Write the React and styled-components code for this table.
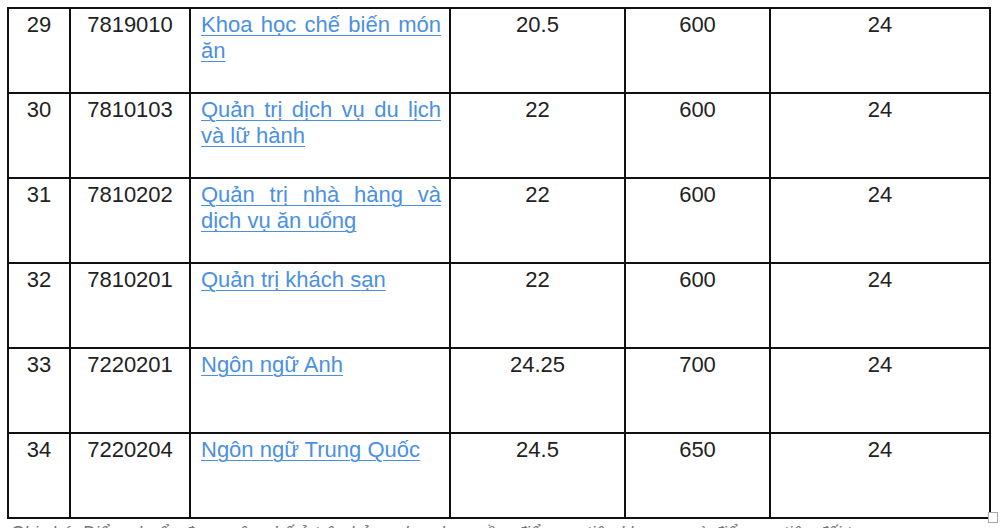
import React from 'react';
import styled, { createGlobalStyle } from 'styled-components';

const GlobalStyle = createGlobalStyle`
  html, body {
    margin: 0;
    padding: 0;
    background: #fff;
  }
  body {
    font-family: "Liberation Sans", Arial, sans-serif;
    overflow: hidden;
  }
`;

const columns = [62, 120, 260, 175, 145, 220];

const rows = [
  { stt: 29, code: '7819010', name: 'Khoa học chế biến món ăn', score: '20.5', dgnl: '600', quota: '24' },
  { stt: 30, code: '7810103', name: 'Quản trị dịch vụ du lịch và lữ hành', score: '22', dgnl: '600', quota: '24' },
  { stt: 31, code: '7810202', name: 'Quản trị nhà hàng và dịch vụ ăn uống', score: '22', dgnl: '600', quota: '24' },
  { stt: 32, code: '7810201', name: 'Quản trị khách sạn', score: '22', dgnl: '600', quota: '24' },
  { stt: 33, code: '7220201', name: 'Ngôn ngữ Anh', score: '24.25', dgnl: '700', quota: '24' },
  { stt: 34, code: '7220204', name: 'Ngôn ngữ Trung Quốc', score: '24.5', dgnl: '650', quota: '24' },
];

const Page = styled.div`
  position: relative;
  width: 1000px;
  height: 528px;
  padding: 7px 0 0 7px;
  box-sizing: border-box;
  overflow: hidden;
`;

const Table = styled.table`
  width: 982px;
  border-collapse: collapse;
  table-layout: fixed;
`;

const Col = styled.col`
  width: ${p => p.$w}px;
`;

const Cell = styled.td`
  border: 2px solid #111;
  height: 80px;
  padding: 3px ${p => (p.$link ? '8px' : '4px')} 0 ${p => (p.$link ? '10px' : '4px')};
  vertical-align: top;
  text-align: ${p => (p.$link ? 'justify' : 'center')};
  font-size: 22px;
  line-height: 26px;
  color: #222;
`;

const Link = styled.a`
  color: #4a90e2;
  text-decoration: underline;
  text-underline-offset: 3px;
  text-decoration-thickness: 1px;
`;

const Note = styled.p`
  margin: 3px 0 0 3px;
  font-style: italic;
  font-size: 18px;
  line-height: 22px;
  color: #777;
  white-space: nowrap;
`;

const Marker = styled.span`
  position: absolute;
  right: 2px;
  bottom: 5px;
  width: 8px;
  height: 9px;
  border: 1px solid #aaa;
  background: #fff;
`;

export default function App() {
  return (
    <Page>
      <GlobalStyle />
      <Table>
        <colgroup>
          {columns.map((w, i) => (
            <Col key={i} $w={w} />
          ))}
        </colgroup>
        <tbody>
          {rows.map(r => (
            <tr key={r.stt}>
              <Cell>{r.stt}</Cell>
              <Cell>{r.code}</Cell>
              <Cell $link>
                <Link href="#">{r.name}</Link>
              </Cell>
              <Cell>{r.score}</Cell>
              <Cell>{r.dgnl}</Cell>
              <Cell>{r.quota}</Cell>
            </tr>
          ))}
        </tbody>
      </Table>
      <Note>
        Ghi chú: Điểm chuẩn được công bố ở trên bảng chưa bao gồm điểm ưu tiên khu vực và điểm ưu tiên đối tượng
      </Note>
      <Marker />
    </Page>
  );
}
